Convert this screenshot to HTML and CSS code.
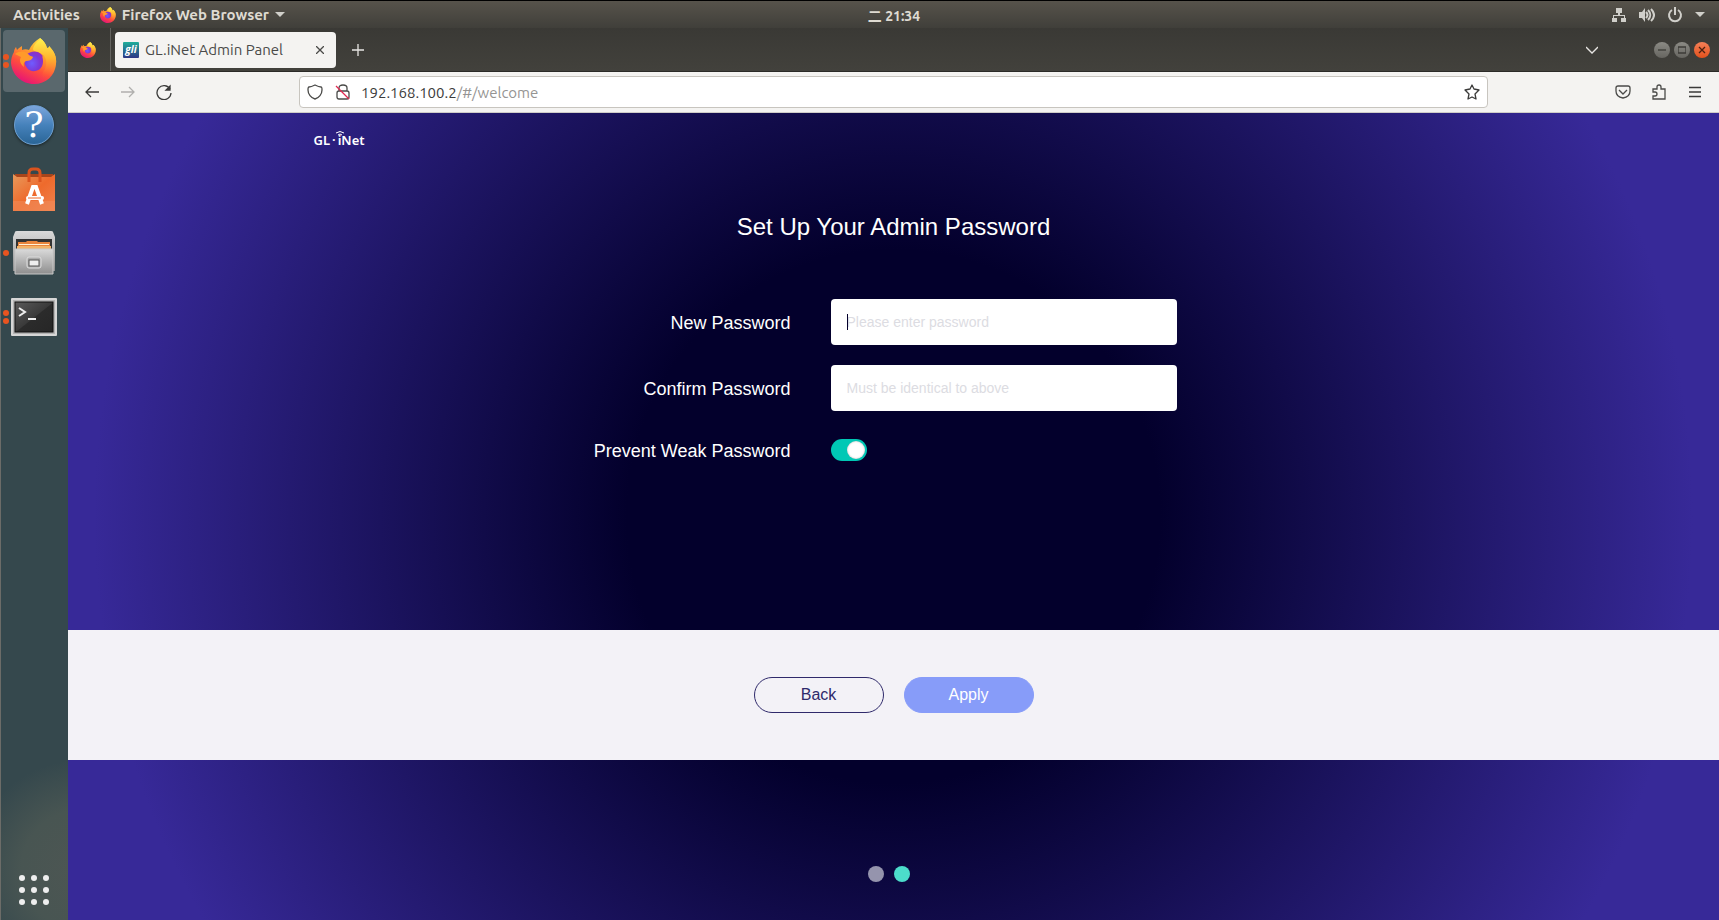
FILE: index.html
```html
<!DOCTYPE html>
<html lang="en">
<head>
    <meta charset="UTF-8">
    <meta name="viewport" content="width=device-width, initial-scale=1.0">
    <title>GL.iNet Admin Panel</title>
    <link rel="stylesheet" href="styles.css">
</head>
<body>
    <!-- shared shapes -->
    <svg class="defs" width="0" height="0" aria-hidden="true">
        <defs>
            <linearGradient id="foxBody" x1="0.8" y1="0" x2="0.3" y2="1">
                <stop offset="0" stop-color="#fff44f"/>
                <stop offset="0.35" stop-color="#ffa32b"/>
                <stop offset="0.65" stop-color="#ff4f3c"/>
                <stop offset="1" stop-color="#e5107a"/>
            </linearGradient>
            <linearGradient id="foxTail" x1="0.5" y1="0" x2="0.5" y2="1">
                <stop offset="0" stop-color="#fff44f"/>
                <stop offset="0.5" stop-color="#ffb52e"/>
                <stop offset="1" stop-color="#ff5a36" stop-opacity="0"/>
            </linearGradient>
            <radialGradient id="foxGlobe" cx="0.4" cy="0.6" r="0.7">
                <stop offset="0" stop-color="#6f5cff"/>
                <stop offset="0.6" stop-color="#7b38d8"/>
                <stop offset="1" stop-color="#9a2cb8"/>
            </radialGradient>
            <linearGradient id="bagOrange" x1="0" y1="0" x2="1" y2="1">
                <stop offset="0" stop-color="#e89a5c"/>
                <stop offset="0.5" stop-color="#ee6a2c"/>
                <stop offset="1" stop-color="#f0824e"/>
            </linearGradient>
            <linearGradient id="steel" x1="0" y1="0" x2="0" y2="1">
                <stop offset="0" stop-color="#dadada"/>
                <stop offset="1" stop-color="#8e8e8e"/>
            </linearGradient>
            <linearGradient id="screen" x1="0" y1="0" x2="1" y2="1">
                <stop offset="0" stop-color="#5a5a5a"/>
                <stop offset="0.5" stop-color="#3a3a3a"/>
                <stop offset="0.52" stop-color="#2b2b2b"/>
                <stop offset="1" stop-color="#262626"/>
            </linearGradient>
            <symbol id="firefox" viewBox="0 0 46 46">
                <path fill="url(#foxBody)" d="M29 0c4 3 6 6 7 10 2 0 2-1 2-2 5 5 8 11 7 18-1 12-10 20-22 20S1 37 0 25c0-4 1-8 3-11 0-2 1-4 2-5l1 3c1-1 3-3 5-4l0 4c2-1 5-1 7 0 2-5 6-9 11-12z"/>
                <path fill="url(#foxTail)" d="M29 0c4 3 6 6 7 10 2 0 2-1 2-2 5 5 8 11 7 18-1 6-4 11-9 14-5 2-6-4-2-9 2-5 2-12-3-15-3-2-9-2-9-5 1-4 4-8 7-9z"/>
                <path fill="url(#foxGlobe)" d="M15 17c4-4 11-5 15-1 3 3 2 3 1 2 2 5 1 10-2 13-4 3-10 3-13-1-3-4-3-7-1-8 3 0 5-1 7-3-2-1-5-1-7-2z"/>
                <path fill="#ff9a2a" d="M4 16c4-3 9-3 12-1 2 2 3 3 6 4-1 3-4 4-7 4-2 1-3 3-2 6-4-3-5-7-3-10-2-1-4-2-6-3z"/>
            </symbol>
        </defs>
    </svg>

    <header class="top-panel">
        <div class="panel-left">
            <button type="button">Activities</button>
            <button type="button" class="app-menu">
                <svg width="16" height="16"><use href="#firefox"/></svg>
                Firefox Web Browser
                <svg width="10" height="6" viewBox="0 0 10 6"><path fill="#d0cfca" d="M0 0h10L5 5z"/></svg>
            </button>
        </div>
        <time class="clock"><span class="cjk">二</span> 21:34</time>
        <button type="button" class="status" aria-label="System menu">
            <svg width="16" height="16" viewBox="0 0 16 16" fill="#d0cfca"><path d="M5 1h6v5H9v2h5v3h1v4h-5v-4h3V9H3v2h3v4H1v-4h1V8h5V6H5z"/></svg>
            <svg width="16" height="16" viewBox="0 0 16 16"><path fill="#d0cfca" d="M0 5h3l3-4v14l-3-4H0z"/><path fill="none" stroke="#d0cfca" stroke-width="2" d="M7 5c2 2 2 4 0 6M9 3c3 3 3 7 0 10M12 2c4 4 4 8 0 12"/></svg>
            <svg width="16" height="16" viewBox="0 0 16 16" fill="none" stroke="#d0cfca" stroke-width="2"><path d="M5 3a6 6 0 1 0 6 0M8 0v8"/></svg>
            <svg width="10" height="6" viewBox="0 0 10 6"><path fill="#d0cfca" d="M0 0h10L5 5z"/></svg>
        </button>
    </header>

    <div class="desktop">
        <nav class="launcher" aria-label="Launcher">
            <a href="#" class="launch active two" aria-label="Firefox">
                <svg width="46" height="46"><use href="#firefox"/></svg>
            </a>
            <a href="#" class="launch help" aria-label="Help"><span>?</span></a>
            <a href="#" class="launch" aria-label="Software">
                <svg width="44" height="44" viewBox="0 0 44 44">
                    <path fill="#a8451b" d="M3 7h38l1 4H2z"/>
                    <path fill="url(#bagOrange)" d="M1 7l4 3h34l4-3v37H1z"/>
                    <path fill="#f08a58" d="M1 34h42v10H1z" opacity="0.6"/>
                    <path fill="none" stroke="#d9531e" stroke-width="3" d="M17 15V6q0-4 4-4h3q4 0 4 4v9"/>
                    <path fill="none" stroke="#fff" stroke-width="4" d="M15 37l6-17h3l6 17"/>
                    <path stroke="#fff" stroke-width="4" stroke-linecap="round" d="M16 31h14"/>
                    <path stroke="#ee6a2c" d="M16 31h13"/>
                </svg>
            </a>
            <a href="#" class="launch one" aria-label="Files">
                <svg width="44" height="44" viewBox="0 0 44 44">
                    <path fill="url(#steel)" d="M3 1q0-1 2-1h34q2 0 2 1l2 5v34H1V6z"/>
                    <path fill="#333" d="M4 8h36v11H4z"/>
                    <path fill="#e9853c" d="M6 11h8l1-1h10l1 1h12v8H6z"/>
                    <path fill="#fff2d8" d="M7 13h30v1H7z"/>
                    <path fill="#f3b469" d="M5 15h34v4H5z"/>
                    <path fill="url(#steel)" stroke="#c8c8c8" d="M3 18h38v25H3z"/>
                    <rect x="15" y="26" width="14" height="11" rx="2" fill="#aaa" stroke="#ddd"/>
                    <rect x="17" y="29" width="10" height="6" fill="#eee" stroke="#555"/>
                </svg>
            </a>
            <a href="#" class="launch two" aria-label="Terminal">
                <svg width="46" height="38" viewBox="0 0 46 38">
                    <rect width="46" height="38" rx="1" fill="#d6d6d6"/>
                    <rect x="2" y="2" width="42" height="34" fill="#b4b4b4"/>
                    <rect x="4" y="4" width="38" height="30" fill="url(#screen)" stroke="#111"/>
                    <path fill="none" stroke="#eee" stroke-width="2" d="M8 10l6 4-6 4M17 21h8"/>
                </svg>
            </a>
            <button type="button" class="show-apps" aria-label="Show applications">
                <svg width="30" height="30" viewBox="0 0 30 30" fill="#eee">
                    <circle cx="3" cy="3" r="3"/><circle cx="15" cy="3" r="3"/><circle cx="27" cy="3" r="3"/>
                    <circle cx="3" cy="15" r="3"/><circle cx="15" cy="15" r="3"/><circle cx="27" cy="15" r="3"/>
                    <circle cx="3" cy="27" r="3"/><circle cx="15" cy="27" r="3"/><circle cx="27" cy="27" r="3"/>
                </svg>
            </button>
        </nav>

        <div class="browser">
            <div class="tab-bar">
                <button type="button" class="pinned" aria-label="Firefox View"><svg width="16" height="16"><use href="#firefox"/></svg></button>
                <div class="tab">
                    <span class="favicon">gli</span>
                    <span class="tab-title">GL.iNet Admin Panel</span>
                    <button type="button" aria-label="Close tab"><svg width="8" height="8" viewBox="0 0 8 8" stroke="#4a4a48"><path d="M0 0l8 8M8 0L0 8"/></svg></button>
                </div>
                <button type="button" class="new-tab" aria-label="New tab"><svg width="12" height="12" viewBox="0 0 12 12" stroke="#e8e6e3"><path d="M6 0v12M0 6h12"/></svg></button>
                <button type="button" class="list-tabs" aria-label="List all tabs"><svg width="12" height="8" viewBox="0 0 12 8" fill="none" stroke="#e8e6e3"><path d="M0 1l6 6 6-6"/></svg></button>
                <div class="window-buttons">
                    <button type="button" aria-label="Minimize"><svg width="8" height="8" viewBox="0 0 8 8" stroke="#3c3b37"><path d="M0 4h8"/></svg></button>
                    <button type="button" aria-label="Maximize"><svg width="8" height="8" viewBox="0 0 8 8" fill="none" stroke="#3c3b37"><path d="M0 1h8v6H0z"/></svg></button>
                    <button type="button" class="close" aria-label="Close"><svg width="8" height="8" viewBox="0 0 8 8" stroke="#4a2010"><path d="M1 1l6 6M7 1L1 7"/></svg></button>
                </div>
            </div>

            <div class="nav-bar">
                <div class="nav-buttons">
                    <button type="button" aria-label="Back"><svg width="16" height="16" viewBox="0 0 16 16" fill="none" stroke="#3b3b3a"><path d="M15 8H2M7 3L2 8l5 5"/></svg></button>
                    <button type="button" aria-label="Forward"><svg width="16" height="16" viewBox="0 0 16 16" fill="none" stroke="#b0afad"><path d="M1 8h13M9 3l5 5-5 5"/></svg></button>
                    <button type="button" aria-label="Reload"><svg width="16" height="16" viewBox="0 0 16 16" fill="none" stroke="#3b3b3a"><path d="M14 5A7 7 0 1 0 15 9"/><path fill="#3b3b3a" d="M14 2v4h-4z"/></svg></button>
                </div>
                <div class="url-bar">
                    <svg width="16" height="16" viewBox="0 0 16 16" fill="none" stroke="#4a4a48"><path d="M8 1C6 2 4 3 2 3 1 3 1 4 1 6c0 4 3 8 7 9 4-1 7-5 7-9 0-2 0-3-1-3-2 0-4-1-6-2z"/></svg>
                    <svg width="16" height="16" viewBox="0 0 16 16" fill="none" stroke="#4a4a48"><path d="M4 7V4q0-3 4-3t4 3v3M4 7h8q2 0 2 2v4q0 2-2 2H4q-2 0-2-2V9q0-2 2-2z"/><path stroke="#e22850" d="M1 2l13 13"/></svg>
                    <span class="url">192.168.100.2<span>/#/welcome</span></span>
                    <svg width="16" height="16" viewBox="0 0 16 16" fill="none" stroke="#3b3b3a" stroke-linejoin="round"><path d="M8 1l2 4 5 1-4 4 1 5-4-2-4 2 1-5-4-4 5-1z"/></svg>
                </div>
                <div class="nav-tools">
                    <button type="button" aria-label="Save to Pocket"><svg width="16" height="16" viewBox="0 0 16 16" fill="none" stroke="#4a4a48"><path d="M3 2h10q2 0 2 2v3q0 6-7 7-7-1-7-7V4q0-2 2-2zM4 6l4 4 4-4"/></svg></button>
                    <button type="button" aria-label="Extensions"><svg width="16" height="16" viewBox="0 0 16 16" fill="none" stroke="#4a4a48"><path d="M2 8V5h4V3q0-2 2-2t2 2v2h4v10H2v-3h2q2 0 2-2T4 8z"/></svg></button>
                    <button type="button" aria-label="Menu"><svg width="16" height="16" viewBox="0 0 16 16" stroke="#3b3b3a"><path d="M2 3.500h12M2 8h12M2 12.500h12"/></svg></button>
                </div>
            </div>

            <main class="page">
                <section class="setup">
                    <div class="container">
                        <a href="#" class="logo">GL<span class="logo-dot">·</span><span class="logo-i">i<svg width="8" height="5" viewBox="0 0 8 5" fill="none" stroke="#fff"><path d="M0 2q4-3 8 0M2 4q2-2 4 0"/></svg></span>Net</a>
                        <h1>Set Up Your Admin Password</h1>
                        <form id="passwordForm">
                            <label for="newPassword">New Password</label>
                            <div class="field focused"><input type="password" id="newPassword" placeholder="Please enter password"></div>
                            <label for="confirmPassword">Confirm Password</label>
                            <div class="field"><input type="password" id="confirmPassword" placeholder="Must be identical to above"></div>
                            <label for="preventWeak" class="toggle-label">Prevent Weak Password</label>
                            <input type="checkbox" id="preventWeak" class="toggle" checked>
                        </form>
                    </div>
                </section>
                <div class="actions">
                    <button type="button" class="btn">Back</button>
                    <button type="submit" form="passwordForm" class="btn apply">Apply</button>
                </div>
                <div class="steps">
                    <span class="step"></span>
                    <span class="step current"></span>
                </div>
            </main>
        </div>
    </div>
</body>
</html>
```
FILE: styles.css
```css
* {
    box-sizing: border-box;
}

body {
    margin: 0;
    min-height: 100vh;
    display: flex;
    flex-direction: column;
    font-family: Ubuntu, "Noto Sans", "Noto Sans CJK SC", sans-serif;
    font-size: 15px;
    background: #3c3b37;
}

button {
    margin: 0;
    padding: 0;
    border: none;
    background: none;
    font: inherit;
    color: inherit;
    cursor: pointer;
}

svg {
    display: block;
    flex: none;
}

.defs {
    position: absolute;
}

/* Top panel */
.top-panel {
    display: grid;
    grid-template-columns: 1fr auto 1fr;
    align-items: center;
    height: 28px;
    padding: 0 14px 0 13px;
    border-top: 1px solid #000;
    background: linear-gradient(#57534b, #403f3a);
    color: #dfdbd2;
    font-weight: 600;
}

.panel-left,
.app-menu,
.status {
    display: flex;
    align-items: center;
}

.panel-left {
    gap: 20px;
}

.app-menu {
    gap: 6px;
}

.clock {
    padding-left: 70px;
    font-size: 14px;
}

.cjk {
    font-family: "Noto Sans CJK SC", sans-serif;
}

.status {
    justify-self: end;
    gap: 12px;
}

.desktop {
    flex: 1;
    display: flex;
}

/* Launcher */
.launcher {
    flex: none;
    width: 68px;
    display: flex;
    flex-direction: column;
    align-items: center;
    gap: 2px;
    padding: 2px 1px 15px 0;
    border-left: 1px solid #6c6c68;
    background: radial-gradient(circle at 80px calc(100% - 50px), #4d5653 0, #485552 60px, transparent 110px), #35484d;
}

.launch {
    position: relative;
    width: 62px;
    height: 62px;
    display: flex;
    align-items: center;
    justify-content: center;
    border-radius: 4px;
    text-decoration: none;
}

.launch.active {
    background: #5a686d;
}

.launch.one::before,
.launch.two::before,
.launch.two::after {
    content: "";
    position: absolute;
    left: 0;
    top: 28px;
    width: 6px;
    height: 6px;
    border-radius: 50%;
    background: #e95420;
}

.launch.two::before {
    top: 24px;
}

.launch.two::after {
    top: 32px;
}

.help span {
    width: 40px;
    height: 40px;
    border: 1px solid #6d9fd0;
    border-radius: 50%;
    background: linear-gradient(#7ba5dc, #4682bb 50%, #2a6597);
    box-shadow: 0 1px 3px rgba(0, 0, 0, 0.5);
    color: #fff;
    font: 36px/38px "DejaVu Serif", serif;
    text-align: center;
}

.show-apps {
    margin-top: auto;
}

/* Browser */
.browser {
    flex: 1;
    min-width: 0;
    display: flex;
    flex-direction: column;
}

.tab-bar {
    display: flex;
    align-items: center;
    height: 44px;
    padding-right: 9px;
    border-bottom: 1px solid #2b2a27;
    background: linear-gradient(#3a3935, #42413c);
}

.pinned {
    display: flex;
    align-items: center;
    justify-content: center;
    align-self: stretch;
    width: 43px;
    padding-right: 2px;
    border-right: 1px solid #64635f;
}

.tab {
    display: flex;
    align-items: center;
    width: 221px;
    height: 36px;
    margin-left: 4px;
    padding: 0 12px 0 8px;
    border-radius: 4px;
    background: #f4f3f1;
    color: #4a4a48;
}

.tab-title {
    flex: 1;
    margin-left: 6px;
    white-space: nowrap;
}

.favicon {
    width: 16px;
    height: 16px;
    border-radius: 1px;
    background: linear-gradient(#1fae9a, #2e3586);
    color: #fff;
    font: italic bold 10px/14px "Open Sans", sans-serif;
    text-align: center;
}

.new-tab {
    margin-left: 16px;
}

.list-tabs {
    margin-left: auto;
}

.tab-bar svg,
.nav-bar svg {
    stroke-width: 1.3;
}

.window-buttons {
    display: flex;
    gap: 4px;
    margin-left: 56px;
}

.window-buttons button {
    display: flex;
    align-items: center;
    justify-content: center;
    width: 16px;
    height: 16px;
    border-radius: 50%;
    background: linear-gradient(#8b8a84, #666560);
}

.window-buttons .close {
    background: linear-gradient(#f58058, #e2511c);
}

.nav-bar {
    display: flex;
    align-items: center;
    height: 41px;
    padding: 0 16px;
    border-bottom: 1px solid #cfcdc8;
    background: #f4f3f1;
}

.nav-buttons,
.nav-tools {
    display: flex;
    gap: 20px;
    width: 215px;
}

.nav-tools {
    justify-content: flex-end;
}

.url-bar {
    flex: 1;
    display: flex;
    align-items: center;
    gap: 12px;
    height: 32px;
    padding: 0 7px;
    border: 1px solid #c8c5bf;
    border-radius: 4px;
    background: #fff;
    color: #3b3b3a;
}

.url {
    flex: 1;
    margin-left: -2px;
}

.url span {
    color: #959492;
}

/* Setup page */
.page {
    flex: 1;
    display: flex;
    flex-direction: column;
    background: radial-gradient(circle, #03002c 29%, #372998 87%);
    font-family: "Liberation Sans", Arial, sans-serif;
    color: #fff;
}

.setup {
    flex: 1;
}

.container {
    max-width: 1160px;
    margin: 0 auto;
}

.logo {
    display: inline-block;
    margin-top: 17px;
    color: #fff;
    font: 600 13px/20px "Noto Sans", sans-serif;
    text-decoration: none;
}

.logo-dot {
    margin: 0 2px;
}

.logo-i {
    position: relative;
}

.logo-i svg {
    position: absolute;
    left: -2px;
    top: 0;
}

h1 {
    margin: 61px 0 56px;
    font-size: 24px;
    font-weight: normal;
    line-height: 32px;
    text-align: center;
}

form {
    display: grid;
    grid-template-columns: 477px 346px;
    gap: 20px 40px;
    align-items: center;
    font-size: 18px;
}

label {
    padding-top: 2px;
    text-align: right;
}

.field {
    position: relative;
}

.field input {
    display: block;
    width: 100%;
    height: 46px;
    padding: 0 16px;
    border: none;
    border-radius: 4px;
    outline: none;
    background: #fff;
    font: 14px "Liberation Sans", Arial, sans-serif;
}

.field input::placeholder {
    color: #dcdce2;
}

/* text cursor */
.focused::after {
    content: "";
    position: absolute;
    left: 16px;
    top: 15px;
    width: 1px;
    height: 16px;
    background: #03002c;
}

.toggle-label,
.toggle {
    margin: 6px 0 0;
}

.toggle-label {
    padding-top: 4px;
}

.toggle {
    appearance: none;
    display: flex;
    justify-content: flex-end;
    width: 36px;
    height: 22px;
    padding: 2px;
    border-radius: 11px;
    background: #00c8b5;
}

.toggle::before {
    content: "";
    width: 18px;
    height: 18px;
    border-radius: 50%;
    background: #fff;
    box-shadow: inset 0 0 2px rgba(0, 0, 0, 0.3);
}

.toggle:not(:checked) {
    justify-content: flex-start;
    background: #999;
}

.actions {
    display: flex;
    align-items: center;
    justify-content: center;
    gap: 20px;
    height: 130px;
    background: #f3f2f7;
}

.btn {
    width: 130px;
    height: 36px;
    border: 1px solid #2f2a6b;
    border-radius: 18px;
    color: #2f2a6b;
    font-size: 16px;
}

.apply {
    border-color: #879cf9;
    background: #879cf9;
    color: #fff;
}

.steps {
    display: flex;
    justify-content: center;
    height: 160px;
    padding-top: 106px;
}

.step {
    width: 16px;
    height: 16px;
    margin-right: 10px;
    border-radius: 50%;
    background: #9594ad;
}

.step.current {
    background: #4cdccb;
}
```
